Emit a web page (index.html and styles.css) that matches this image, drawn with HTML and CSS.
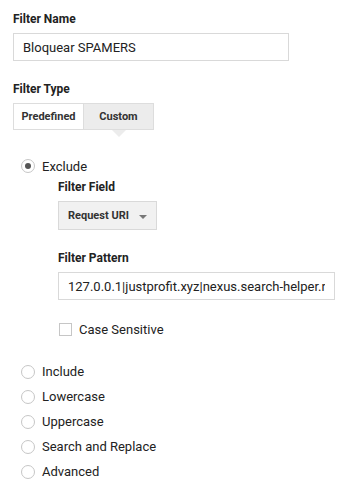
FILE: index.html
```html
<html lang="en">
<head>
    <meta charset="UTF-8">
    <title>Filter</title>
    <link rel="stylesheet" href="styles.css">
</head>
<body>
    <div class="container">
        <div class="section">
            <label class="title" for="name">Filter Name</label>
            <input type="text" id="name" class="field name-field" value="Bloquear SPAMERS">
        </div>

        <div class="section type-section">
            <div class="title">Filter Type</div>
            <div class="tabs">
                <div class="tab">Predefined</div>
                <div class="tab active">Custom</div>
            </div>
        </div>

        <div class="options">
            <div class="option first">
                <span class="radio checked"></span>
                <span>Exclude</span>
            </div>
            <div class="sub">
                <div class="title">Filter Field</div>
                <div class="dropdown">
                    <span>Request URI</span>
                    <span class="caret"></span>
                </div>
                <div class="title pattern-title">Filter Pattern</div>
                <input type="text" class="field pattern-field" value="127.0.0.1|justprofit.xyz|nexus.search-helper.ru">
                <div class="check-row">
                    <span class="checkbox"></span>
                    <span>Case Sensitive</span>
                </div>
            </div>
            <div class="option"><span class="radio"></span><span>Include</span></div>
            <div class="option"><span class="radio"></span><span>Lowercase</span></div>
            <div class="option"><span class="radio"></span><span>Uppercase</span></div>
            <div class="option"><span class="radio"></span><span>Search and Replace</span></div>
            <div class="option"><span class="radio"></span><span>Advanced</span></div>
        </div>
    </div>
</body>
</html>
```

FILE: styles.css
```css
body {
    margin: 0;
    background: #fff;
    font-family: Roboto, "Liberation Sans", sans-serif;
    color: #222;
}

.container {
    padding: 11px 13px;
}

.title {
    display: block;
    font-size: 12px;
    font-weight: bold;
    line-height: 16px;
    color: #222;
    margin-bottom: 6px;
}

.field {
    box-sizing: border-box;
    height: 28px;
    border: 1px solid #d9d9d9;
    background: #fff;
    font-family: inherit;
    font-size: 13px;
    color: #222;
    padding: 0 9px;
    line-height: 26px;
    outline: none;
    display: block;
    margin: 0;
}

.name-field {
    width: 276px;
}

.type-section {
    margin-top: 20px;
}

.tabs {
    display: flex;
    width: 141px;
    height: 27px;
    border: 1px solid #ddd;
    box-sizing: border-box;
}

.tab {
    flex: 1;
    display: flex;
    align-items: center;
    justify-content: center;
    font-size: 11px;
    font-weight: bold;
    color: #333;
    background: #fff;
}

.tab.active {
    background: #ececec;
    border-left: 1px solid #ddd;
    position: relative;
}

.tab.active::after {
    content: "";
    position: absolute;
    left: 50%;
    bottom: -8px;
    margin-left: -7px;
    border-left: 7px solid transparent;
    border-right: 7px solid transparent;
    border-top: 7px solid #ececec;
}

.options {
    margin-top: 29px;
    padding-left: 8px;
}

.option {
    display: flex;
    align-items: center;
    height: 25px;
    font-size: 13px;
    color: #222;
}

.option.first {
    height: 14px;
}

.radio {
    box-sizing: border-box;
    width: 14px;
    height: 14px;
    border: 1px solid #c6c6c6;
    border-radius: 50%;
    margin-right: 7px;
    background: #fff;
    display: flex;
    align-items: center;
    justify-content: center;
}

.radio.checked::after {
    content: "";
    width: 6px;
    height: 6px;
    border-radius: 50%;
    background: #555;
}

.sub {
    padding-left: 37px;
    padding-top: 6px;
    padding-bottom: 22px;
}

.dropdown {
    box-sizing: border-box;
    width: 99px;
    height: 29px;
    border: 1px solid #d9d9d9;
    background: #f1f1f1;
    display: flex;
    align-items: center;
    justify-content: space-between;
    padding: 0 9px;
    font-size: 11px;
    font-weight: bold;
    color: #333;
}

.caret {
    width: 0;
    height: 0;
    border-left: 4px solid transparent;
    border-right: 4px solid transparent;
    border-top: 4px solid #777;
    margin-top: 2px;
}

.pattern-title {
    margin-top: 20px;
}

.pattern-field {
    width: 277px;
}

.check-row {
    display: flex;
    align-items: center;
    margin-top: 22px;
    font-size: 13px;
    margin-left: 1px;
}

.checkbox {
    box-sizing: border-box;
    width: 13px;
    height: 13px;
    border: 1px solid #c6c6c6;
    background: #fff;
    margin-right: 7px;
}
```
